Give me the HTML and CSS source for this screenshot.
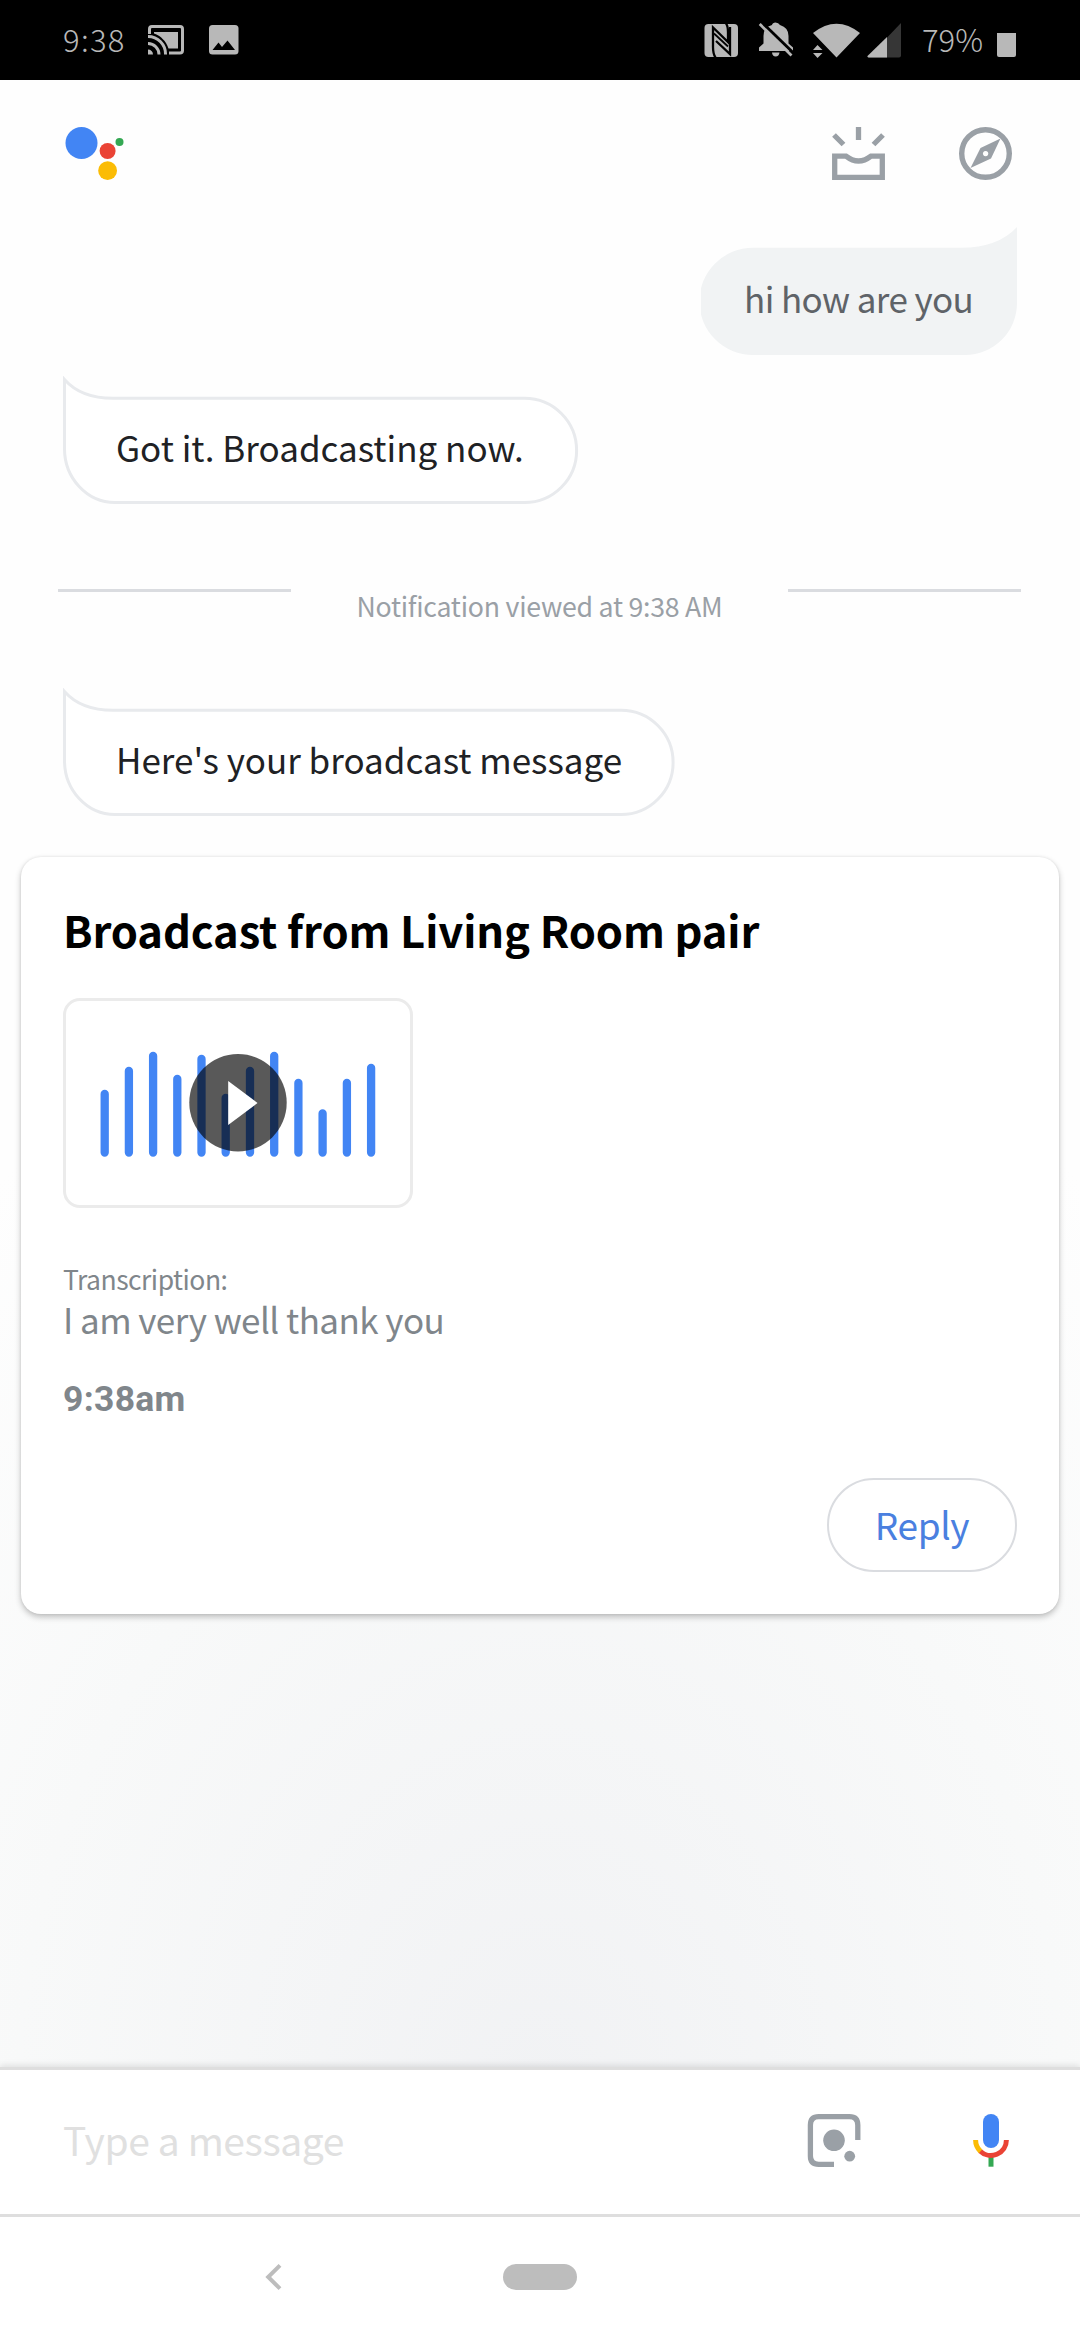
FILE: index.html
```html
<!DOCTYPE html>
<html lang="en">
<head>
<meta charset="utf-8">
<title>Assistant</title>
<link rel="stylesheet" href="styles.css">
</head>
<body>
<div class="screen">
  <div class="status">
    <span class="status-text clock">9:38</span>
    <svg class="cast" width="36" height="80" viewBox="0 0 36 80">
      <g fill="none" stroke="#b8b8b8" stroke-width="3"><path d="M1.500 34V29q0-2.500 2.500-2.500H32q2.500 0 2.500 2.500V50.500q0 2.500-2.500 2.500H21"/><path d="M0 36.500A17.500 17.500 0 0 1 17.500 54.500M0 43.500A11 11 0 0 1 11 54.500"/></g>
      <path fill="#b8b8b8" d="M0 49.500a5 5 0 0 1 5 5H0zM6 32H30V48.500H20.500C18 41 13 36 6 33.500z"/>
    </svg>
    <svg class="photo" width="30" height="80" viewBox="0 0 30 80">
      <rect y="25" width="29.500" height="29.500" rx="3.500" fill="#b8b8b8"/><path d="M3.500 50L9.500 42.500L13 47L18.500 40.500L26 50z"/>
    </svg>
    <span class="grow"></span>
    <svg class="nfc" width="34" height="80" viewBox="705 0 34 80">
      <rect x="705.500" y="24" width="33.500" height="33" rx="4" fill="#b8b8b8"/>
      <g fill="none" stroke="#000" stroke-width="2.300">
        <path d="M716.500 57.500Q714 54 714 47V27.500L729 42V32Q729 26 727 23.500"/>
        <path d="M731 27V54L717 41"/>
        <path d="M715 33.500L729 46.500" stroke-width="1.800"/>
      </g>
    </svg>
    <svg class="bell" width="36" height="80" viewBox="758 0 36 80">
      <path fill="#b8b8b8" d="M759 51V47.500L763.500 43.500V36Q763.500 27 772 25Q772.500 22.500 775.500 22.500T780 25Q788.500 27.500 788.500 36V43.500L793 47.500V51zM772 52.500H779.500Q779 56.500 775.700 56.500T772 52.500z"/>
      <path d="M762 22.500L795 54.500" stroke="#000" stroke-width="3"/><path d="M759.700 24L791.500 55.500" stroke="#b8b8b8" stroke-width="2.700"/>
    </svg>
    <svg class="wifi" width="48" height="80" viewBox="813 0 48 80">
      <path fill="#b8b8b8" d="M813 33Q836.500 14.500 860 33L836.500 57.500zM813 50L817.500 45L822.500 50zM813 53H822.500L817.500 58z"/>
    </svg>
    <svg class="signal" width="35" height="80" viewBox="867 0 35 80">
      <path fill="#363636" d="M901 23V55.500Q901 57.500 899 57.500H868z"/><path fill="#b8b8b8" d="M887 37V57.500H868.500Q866.500 57 868 55.500z"/>
    </svg>
    <span class="status-text percent">79%</span>
    <svg class="battery" width="20" height="80" viewBox="0 0 20 80"><path fill="#b8b8b8" d="M0 33H19V55Q19 57 17 57H2Q0 57 0 55z"/></svg>
  </div>

  <div class="header">
    <svg width="62" height="56" viewBox="63 125 62 56">
      <circle cx="81.500" cy="143" r="16" fill="#4285f4"/><circle cx="107.600" cy="151" r="8" fill="#ea4335"/><circle cx="119.500" cy="142" r="4" fill="#34a853"/><circle cx="107.600" cy="170.700" r="9.400" fill="#fbbc05"/>
    </svg>
    <span class="grow"></span>
    <svg class="tray" width="56" height="56" viewBox="830 125 56 56" fill="none" stroke="#9aa0a6" stroke-width="5.300">
      <path d="M834.700 156.200H846Q858.500 166 871 156.200H882.300V177.300H834.700z"/><path d="M858.500 127V140M834 135L843.500 144.500M883 135L873.500 144.500"/>
    </svg>
    <svg width="56" height="56" viewBox="958 125 56 56">
      <circle cx="985.500" cy="153.500" r="23.800" fill="none" stroke="#9aa0a6" stroke-width="5.400"/>
      <path fill="#9aa0a6" fill-rule="evenodd" d="M1000.500 138.500L991 158.500L970.500 168L980.500 148zM985.600 150.900a2.700 2.700 0 1 0 .01 0z"/>
    </svg>
  </div>

  <div class="chat">
    <div class="bubble mine">
      <svg width="316" height="128" viewBox="0 0 316 128"><path fill="#f1f3f4" d="M52 20.700H260Q297 20.700 316 0V76A52 52 0 0 1 264 128H52A53.600 53.600 0 0 1 52 20.700z"/></svg>
      <span>hi how are you</span>
    </div>
    <div class="bubble">
      <svg width="516" height="128" viewBox="0 0 516 128"><path fill="#fff" stroke="#e8eaed" stroke-width="3" d="M1.500 3.500Q18 22.300 50 22.300H461.500A52 52 0 0 1 461.500 126.500H52A50.500 54 0 0 1 1.500 72z"/></svg>
      <span>Got it. Broadcasting now.</span>
    </div>
    <div class="divider"><i></i><span>Notification viewed at 9:38 AM</span><i></i></div>
    <div class="bubble second">
      <svg width="612" height="128" viewBox="0 0 612 128"><path fill="#fff" stroke="#e8eaed" stroke-width="3" d="M1.500 3.500Q18 22.300 50 22.300H558A52 52 0 0 1 558 126.500H52A50.500 54 0 0 1 1.500 72z"/></svg>
      <span>Here's your broadcast message</span>
    </div>

    <div class="card">
      <h1>Broadcast from Living Room pair</h1>
      <div class="thumb">
        <svg width="344" height="204" viewBox="66 1001 344 204">
          <g stroke="#4285f4" stroke-width="8.300" stroke-linecap="round">
            <path d="M104.700 1094V1152.500M128.900 1071V1152.500M153.100 1056V1152.500M177.300 1079V1152.500M201.500 1059V1152.500M225.700 1098V1152.500M250 1071V1152.500M274.200 1056V1152.500M298.400 1083V1152.500M322.600 1113.500V1152.500M346.900 1083V1152.500M371.100 1068V1152.500"/>
          </g>
          <circle cx="238" cy="1102.700" r="48.700" fill="#000" fill-opacity=".65"/><path fill="#fff" d="M228.200 1081V1125L257.500 1103z"/>
        </svg>
      </div>
      <p class="label">Transcription:</p>
      <p class="words">I am very well thank you</p>
      <p class="time">9:38am</p>
      <div class="reply">Reply</div>
    </div>
  </div>

  <div class="composer">
    <span class="placeholder">Type a message</span>
    <span class="grow"></span>
    <svg class="lens" width="56" height="56" viewBox="806 2112 56 56">
      <path fill="none" stroke="#9aa0a6" stroke-width="5.300" d="M857.800 2140V2125Q857.800 2116.700 849.500 2116.700H818.700Q810.400 2116.700 810.400 2125V2156Q810.400 2164.300 818.700 2164.300H834"/>
      <circle cx="834" cy="2140.300" r="10.800" fill="#9aa0a6"/><circle cx="849.700" cy="2156.200" r="5.400" fill="#9aa0a6"/>
    </svg>
    <svg class="mic" width="56" height="56" viewBox="963 2112 56 56" fill="none" stroke-width="5">
      <rect x="983" y="2114" width="16" height="34" rx="8" fill="#4285f4"/>
      <path stroke="#34a853" d="M991 2156V2166.700"/>
      <path stroke="#ea4335" d="M1006.400 2140A15.400 15.400 0 0 1 980.100 2150.900"/>
      <path stroke="#fbbc05" d="M975.600 2140A15.400 15.400 0 0 0 980.500 2151.300"/>
    </svg>
  </div>
  <div class="nav">
    <svg class="back" width="20" height="30" viewBox="263 2262 20 30"><path fill="none" stroke="#bdbdbd" stroke-width="4" d="M280 2265.300L268.200 2277L280 2288.700"/></svg>
    <span class="pill"></span>
  </div>
</div>
</body>
</html>
```

FILE: styles.css
```css
body { margin: 0; background: #fff; }
.screen {
  width: 1080px; height: 2340px; overflow: hidden;
  display: flex; flex-direction: column;
  font-family: "Noto Sans CJK SC", "Noto Sans", sans-serif;
  background: radial-gradient(ellipse 900px 1150px at 540px 2100px, #f1f2f4 0%, #f8f9f9 58%, #fefefe 100%);
}
svg { display: block; flex: none; }
span { white-space: nowrap; }
.grow { flex: 1; }

.status { flex: none; height: 80px; background: #000; display: flex; }
.status-text { color: #b8b8b8; font-size: 31px; font-weight: 300; line-height: 77px; }
.clock { width: 84px; padding-left: 63px; letter-spacing: 1.300px; }
.cast { margin-left: 1px; }
.photo { margin-left: 25px; }
.bell { margin-left: 20px; }
.wifi { margin-left: 19px; }
.signal { margin-left: 6px; }
.percent { width: 74px; padding-left: 20px; }
.battery { margin-left: 1px; margin-right: 63px; }

.header { flex: none; height: 102px; padding: 45px 66px 0 63px; display: flex; }
.tray { margin-right: 72px; }

.chat { flex: 1; display: flex; flex-direction: column; align-items: flex-start; }
.bubble { display: grid; margin: 21px 0 0 63px; color: #202124; font-size: 35px; line-height: 40px; }
.bubble > * { grid-area: 1 / 1; }
.bubble > span { padding: 51px 0 0 53px; }
.bubble.mine { align-self: flex-end; margin: 0 63px 0 0; color: #5f6368; letter-spacing: -.600px; }
.bubble.mine > span { padding-left: 43px; }
.bubble.second { margin-top: 67px; }

.divider {
  width: 963px; margin: 85px 0 0 58px; display: flex; justify-content: space-between;
  color: #9aa0a6; font-size: 26.700px; line-height: 32px; letter-spacing: -.240px;
}
.divider span { padding-top: 1px; height: 31px; }
.divider i { width: 233px; height: 3px; background: #dadce0; }

.card {
  box-sizing: border-box; width: 1038px; height: 757px; margin: 41px 0 0 21px; padding: 43px 42px 42px;
  display: flex; flex-direction: column; align-items: flex-start;
  border-radius: 20px; background: #fff;
  box-shadow: 0 3px 6px rgba(0,0,0,.24), 0 0 3px rgba(0,0,0,.08);
}
h1 { margin: 0 0 38px; font-size: 43.500px; line-height: 60px; font-weight: 700; letter-spacing: -.120px; color: #000; }
.thumb { border: 3px solid #ebebeb; border-radius: 17px; }
p { margin: 0; color: #80868b; }
.label { margin-top: 55px; font-size: 26.500px; line-height: 32px; letter-spacing: -.500px; }
.words { margin-top: 4px; font-size: 35px; line-height: 40px; letter-spacing: -.550px; }
.time { margin-top: 40px; font: 700 35.500px/40px Roboto, sans-serif; letter-spacing: .300px; }
.reply {
  align-self: flex-end; box-sizing: border-box; width: 190px; height: 94px; margin-top: 59px;
  border: 2px solid #dadce0; border-radius: 47px; color: #4a80e0;
  font-size: 37px; line-height: 88px; letter-spacing: -.400px; text-align: center;
}

.composer {
  flex: none; height: 144px; padding: 0 61px 0 63px; display: flex; align-items: center;
  background: #fff; border-top: 3px solid #dedede; border-bottom: 3px solid #dedede;
  box-shadow: 0 -2px 6px rgba(0,0,0,.1);
}
.placeholder { color: #e0e0e0; font-size: 39px; line-height: 50px; padding-bottom: 6px; letter-spacing: -.400px; }
.lens { margin: 0 101px 4px 0; }
.mic { margin-bottom: 4px; }
.nav { flex: none; height: 123px; background: #fff; display: flex; align-items: flex-start; }
.back { margin: 45px 220px 0 263px; }
.pill { width: 74px; height: 26px; margin-top: 47px; border-radius: 13px; background: #bdbdbd; }
```
